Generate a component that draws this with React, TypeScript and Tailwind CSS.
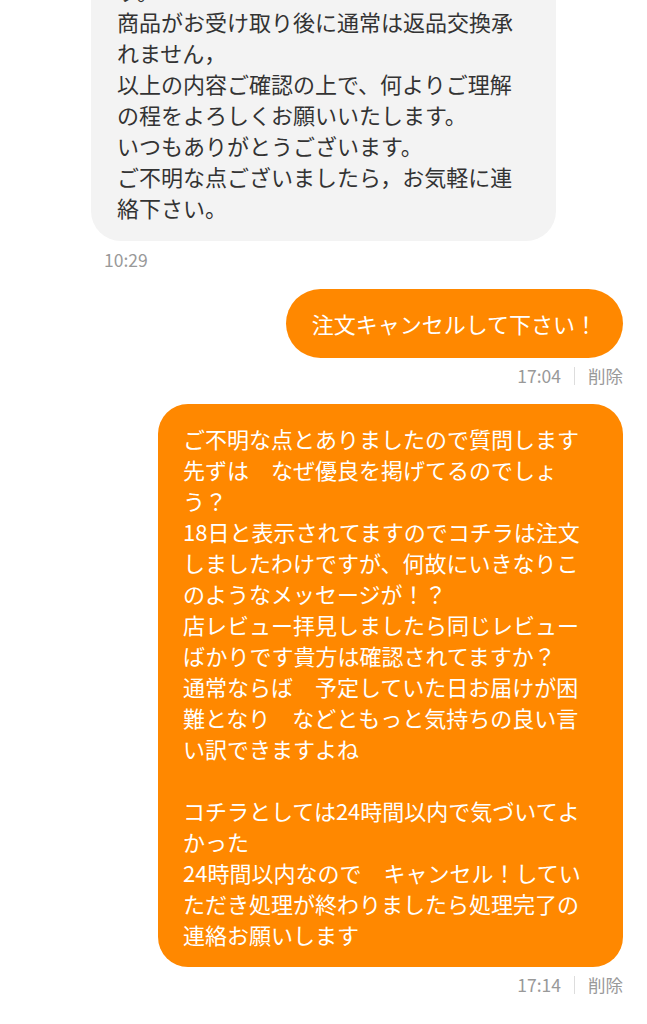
import React from 'react';

const FONT = '"Noto Sans CJK JP", "Noto Sans", sans-serif';

const incoming = `商品は既に発送の準備中となっております。
商品がお受け取り後に通常は返品交換承れません，
以上の内容ご確認の上で、何よりご理解の程をよろしくお願いいたします。
いつもありがとうございます。
ご不明な点ございましたら，お気軽に連絡下さい。`;

const longMsg = `ご不明な点とありましたので質問します
先ずは　なぜ優良を掲げてるのでしょう？
18日と表示されてますのでコチラは注文しましたわけですが、何故にいきなりこのようなメッセージが！？
店レビュー拝見しましたら同じレビューばかりです貴方は確認されてますか？
通常ならば　予定していた日お届けが困難となり　などともっと気持ちの良い言い訳できますよね

コチラとしては24時間以内で気づいてよかった
24時間以内なので　キャンセル！していただき処理が終わりましたら処理完了の連絡お願いします`;

const Meta = ({ time }: { time: string }) => (
  <div className="flex items-center justify-end gap-[13px] text-[17.5px] leading-6 text-[#999999]">
    <span>{time}</span>
    <span className="h-[18px] w-px bg-[#dddddd]" />
    <span>削除</span>
  </div>
);

export default function App() {
  return (
    <div className="min-h-screen bg-white overflow-hidden" style={{ fontFamily: FONT }}>
      <div className="-mt-[74px] flex flex-col pl-[91px] pr-[24px]">
        {/* received */}
        <div className="flex flex-col items-start">
          <div className="w-[465px] whitespace-pre-wrap rounded-[30px] bg-[#f3f3f3] px-[26px] pt-[18px] pb-[18px] text-[22px] leading-[31px] text-[#333333]">
            {incoming}
          </div>
          <div className="mt-[7px] ml-[13px] text-[17.5px] leading-6 text-[#999999]">10:29</div>
        </div>

        {/* sent */}
        <div className="mt-[17px] flex flex-col items-end">
          <div className="rounded-full bg-[#ff8800] px-[26px] py-[19px] text-[22px] leading-[31px] text-white">
            注文キャンセルして下さい！
          </div>
          <div className="mt-[6px]">
            <Meta time="17:04" />
          </div>
        </div>

        <div className="mt-[16px] flex flex-col items-end">
          <div className="w-[465px] whitespace-pre-wrap rounded-[30px] bg-[#ff8800] pl-[25px] pr-[24px] pt-[19px] pb-[17px] text-[22px] leading-[31px] text-white">
            {longMsg}
          </div>
          <div className="mt-[6px]">
            <Meta time="17:14" />
          </div>
        </div>
      </div>
    </div>
  );
}
